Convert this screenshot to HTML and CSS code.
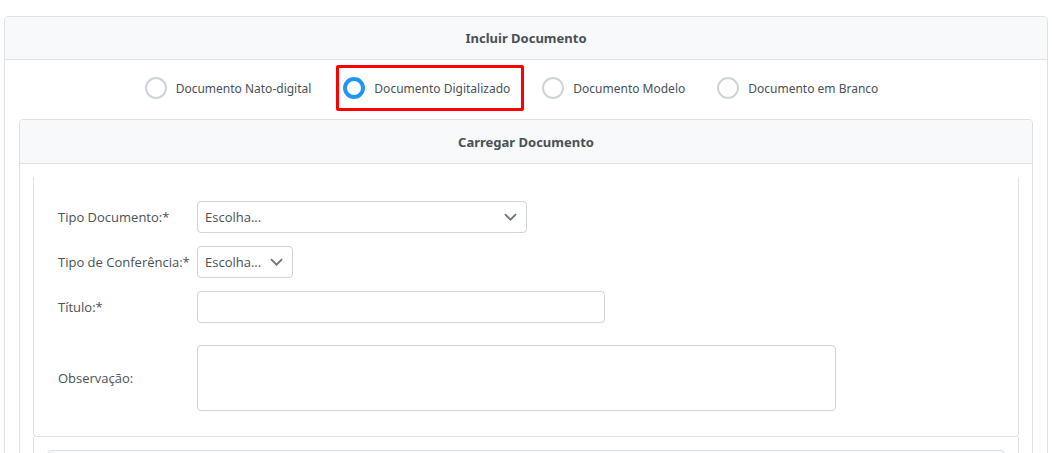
FILE: index.html
```html
<!DOCTYPE html>
<html lang="pt-BR">
<head>
    <meta charset="UTF-8">
    <title>Incluir Documento</title>
    <link rel="stylesheet" href="styles.css">
</head>
<body>
    <main class="panel">
        <h1 class="panel-header">Incluir Documento</h1>
        <div class="panel-content">
            <div class="radio-group" role="radiogroup" aria-label="Incluir Documento">
                <label class="radio-option">
                    <input type="radio" name="origem" value="nato">
                    <span>Documento Nato-digital</span>
                </label>
                <label class="radio-option highlighted">
                    <input type="radio" name="origem" value="digitalizado" checked>
                    <span>Documento Digitalizado</span>
                </label>
                <label class="radio-option">
                    <input type="radio" name="origem" value="modelo">
                    <span>Documento Modelo</span>
                </label>
                <label class="radio-option">
                    <input type="radio" name="origem" value="branco">
                    <span>Documento em Branco</span>
                </label>
            </div>

            <section class="panel">
                <h2 class="panel-header inner-header">Carregar Documento</h2>
                <div class="upload-content">
                    <form class="document-form">
                        <label for="tipoDocumento">Tipo Documento:*</label>
                        <div class="select-wrapper wide">
                            <select id="tipoDocumento">
                                <option>Escolha...</option>
                            </select>
                            <svg class="chevron" viewBox="0 0 14 14" aria-hidden="true"><path d="M1 4.500 7 10.500 13 4.500"/></svg>
                        </div>

                        <label for="tipoConferencia">Tipo de Conferência:*</label>
                        <div class="select-wrapper narrow">
                            <select id="tipoConferencia">
                                <option>Escolha...</option>
                            </select>
                            <svg class="chevron" viewBox="0 0 14 14" aria-hidden="true"><path d="M1 4.500 7 10.500 13 4.500"/></svg>
                        </div>

                        <label for="titulo">Título:*</label>
                        <input type="text" id="titulo">

                        <label class="observacao" for="observacao">Observação:</label>
                        <textarea class="observacao" id="observacao"></textarea>
                    </form>

                    <div class="next-section">
                        <div class="panel next-panel"></div>
                    </div>
                </div>
            </section>
        </div>
    </main>
</body>
</html>
```

FILE: styles.css
```css
* {
    margin: 0;
    padding: 0;
    box-sizing: border-box;
}

body {
    padding: 16px 4px 0;
    background: #ffffff;
    color: #495057;
    font-family: "Noto Sans", "Open Sans", sans-serif;
    font-size: 13px;
    line-height: 18px;
    height: 100vh;
    overflow: hidden;
}

.panel {
    border: 1px solid #dee2e6;
    border-radius: 4px;
}

.panel-header {
    padding: 12px;
    background: #f8f9fa;
    border-bottom: 1px solid #dee2e6;
    border-radius: 3px 3px 0 0;
    font-size: 13px;
    font-weight: 700;
    text-align: center;
}

.inner-header {
    padding-top: 13px;
}

.panel-content {
    padding: 17px 14px 14px;
}

/* Document origin */
.radio-group {
    display: flex;
    justify-content: center;
    gap: 32px;
    padding-right: 29px;
    margin-bottom: 20px;
    font-size: 12px;
}

.radio-option {
    position: relative;
    display: flex;
    align-items: center;
    gap: 9px;
    cursor: pointer;
}

.radio-option span {
    padding-top: 2px;
}

.radio-option input {
    appearance: none;
    width: 22px;
    height: 22px;
    border: 2px solid #ced4da;
    border-radius: 50%;
    background: #ffffff;
}

.radio-option input:checked {
    border: 4px solid #2196f3;
}

.highlighted::after {
    content: "";
    position: absolute;
    inset: -12px -14px -12px -7px;
    border: 3px solid #ff0000;
    border-radius: 2px;
    pointer-events: none;
}

/* Upload form */
.upload-content {
    padding: 13px;
}

.document-form {
    display: grid;
    grid-template-columns: 126px 1fr;
    column-gap: 13px;
    row-gap: 13px;
    align-items: center;
    padding: 24px 24px 25px;
    border: 1px solid #dee2e6;
    border-top: none;
    border-radius: 0 0 4px 4px;
    font-family: "Open Sans", "Noto Sans", sans-serif;
}

.document-form label {
    white-space: nowrap;
}

.observacao {
    margin-top: 9px;
}

select,
input[type="text"],
textarea {
    display: block;
    width: 100%;
    height: 32px;
    padding: 6px 7px;
    border: 1px solid #ced4da;
    border-radius: 4px;
    background: #ffffff;
    color: #495057;
    font: inherit;
}

select {
    appearance: none;
}

input[type="text"] {
    max-width: 408px;
}

textarea {
    max-width: 639px;
    height: 66px;
    resize: none;
}

.select-wrapper {
    position: relative;
}

.wide {
    max-width: 330px;
}

.narrow {
    max-width: 96px;
}

.chevron {
    position: absolute;
    top: 9px;
    right: 10px;
    width: 13px;
    height: 13px;
    fill: none;
    stroke: #6c757d;
    stroke-width: 2;
    pointer-events: none;
}

.next-section {
    padding: 13px;
    border: 1px solid #dee2e6;
    border-top: none;
    border-radius: 0 0 4px 4px;
}

.next-panel {
    height: 44px;
    background: #f8f9fa;
}
```
